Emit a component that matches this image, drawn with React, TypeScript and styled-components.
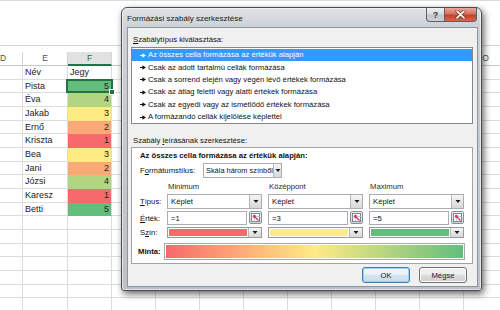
import React from "react";
import styled, { createGlobalStyle, css } from "styled-components";

const GlobalStyle = createGlobalStyle`
  html, body {
    margin: 0;
    padding: 0;
    background: #fff;
  }
  body {
    font-family: "Liberation Sans", Arial, sans-serif;
  }
`;

const COLS = "23px 45px 44px repeat(9, 44px)";
const RED = "#F8696B";
const YELLOW = "#FFEB84";
const GREEN = "#63BE7B";

const scale: Record<string, string> = {
  "1": RED,
  "2": "#FBAA77",
  "3": YELLOW,
  "4": "#B1D580",
  "5": GREEN,
};

const data: [string, string][] = [
  ["Név", "Jegy"],
  ["Pista", "5"],
  ["Éva", "4"],
  ["Jakab", "3"],
  ["Ernő", "2"],
  ["Kriszta", "1"],
  ["Bea", "3"],
  ["Jani", "2"],
  ["Józsi", "4"],
  ["Karesz", "1"],
  ["Betti", "5"],
];

const TOTAL_ROWS = 18;

// columns G..N sit under the dialog, only the visible letters are drawn
const headers = ["D", "E", "F", "", "", "", "", "", "", "", "", "O"];

const rules = [
  "Az összes cella formázása az értékük alapján",
  "Csak az adott tartalmú cellák formázása",
  "Csak a sorrend elején vagy végén lévő értékek formázása",
  "Csak az átlag feletti vagy alatti értékek formázása",
  "Csak az egyedi vagy az ismétlődő értékek formázása",
  "A formázandó cellák kijelölése képlettel",
];

const Sheet = styled.div`
  position: relative;
  width: 500px;
  height: 310px;
  overflow: hidden;
  background: #fff;
`;

const FormulaArea = styled.div`
  height: 44px;
  border-top: 1px solid #dcdcdc;
  border-bottom: 1px solid #d4d4d4;
`;

const HeaderRow = styled.div`
  display: grid;
  grid-template-columns: ${COLS};
  height: 14px;
  margin-top: 6px;
`;

const ColHeader = styled.div<{ $selected?: boolean; $clipped?: boolean }>`
  box-sizing: border-box;
  border-right: 1px solid #d4d4d4;
  border-bottom: 1px solid #c8c8c8;
  font-size: 8.5px;
  line-height: 13px;
  color: #505050;
  text-align: ${(p) => (p.$clipped ? "left" : "center")};
  ${(p) =>
    p.$selected &&
    css`
      background: #e1e1e1;
      color: #1f6b43;
      border-bottom: 2px solid #217346;
      line-height: 12px;
    `}
`;

const Grid = styled.div`
  display: grid;
  grid-template-columns: ${COLS};
  grid-auto-rows: 13.67px;
`;

const Cell = styled.div<{ $bg?: string; $num?: boolean; $active?: boolean }>`
  position: relative;
  box-sizing: border-box;
  border-right: 1px solid #dadcdd;
  border-bottom: 1px solid ${(p) => p.$bg ?? "#dadcdd"};
  background: ${(p) => p.$bg ?? "#fff"};
  font-size: 9px;
  line-height: 13px;
  color: #222;
  padding: 0 2px;
  text-align: ${(p) => (p.$num ? "right" : "left")};
  white-space: nowrap;
  ${(p) =>
    p.$active &&
    css`
      z-index: 1;
      &::after {
        content: "";
        position: absolute;
        inset: -1px -2px -1px -2px;
        border: 2px solid #217346;
      }
      &::before {
        content: "";
        position: absolute;
        right: -4px;
        bottom: -3px;
        width: 4px;
        height: 4px;
        background: #217346;
        border: 1px solid #fff;
        z-index: 2;
      }
    `}
`;

const Dialog = styled.div`
  position: absolute;
  left: 121px;
  top: 7px;
  width: 361px;
  height: 284px;
  box-sizing: border-box;
  display: flex;
  flex-direction: column;
  border: 1px solid #4a4d52;
  border-radius: 6px 6px 3px 3px;
  background: linear-gradient(180deg, #e0e2e5 0px, #cdd0d4 20px, #bdc0c5 100%);
  box-shadow: 2px 3px 7px rgba(0, 0, 0, 0.6), inset 0 0 0 1px rgba(255, 255, 255, 0.55);
  font-family: "Liberation Sans", Arial, sans-serif;
  font-size: 7.7px;
  color: #111;
  z-index: 5;
`;

const TitleBar = styled.div`
  height: 20px;
  display: flex;
  align-items: flex-start;
  padding-right: 4px;
`;

const Title = styled.div`
  flex: 1;
  padding-left: 5px;
  font-size: 8px;
  line-height: 21px;
  color: #1b1b1b;
`;

const CaptionButton = styled.div<{ $close?: boolean }>`
  box-sizing: border-box;
  width: ${(p) => (p.$close ? 32 : 19)}px;
  height: 14px;
  display: flex;
  align-items: center;
  justify-content: center;
  border: 1px solid #5b5e63;
  border-top: none;
  font-size: 9px;
  font-weight: bold;
  color: #3a3a3a;
  ${(p) =>
    p.$close
      ? css`
          border-radius: 0 0 4px 0;
          border-left: none;
          background: linear-gradient(180deg, #e9a99c 0%, #d7705d 45%, #c2422c 55%, #d26a4c 100%);
        `
      : css`
          border-radius: 0 0 0 4px;
          background: linear-gradient(180deg, #eef0f2 0%, #d8dbdf 45%, #c2c6cc 55%, #cfd3d8 100%);
        `}
`;

const Client = styled.div`
  flex: 1;
  margin: 0 4px 4px 6px;
  padding: 7px 4px 0 3px;
  background: #f0f0f0;
  box-shadow: 0 0 0 1px #8e949b;
  display: flex;
  flex-direction: column;
`;

const GroupLabel = styled.div<{ $gap?: number }>`
  height: 10px;
  line-height: 10px;
  margin: ${(p) => p.$gap ?? 0}px 0 ${(p) => (p.$gap ? 1 : 2)}px 2px;
  white-space: nowrap;
`;

const ListBox = styled.div`
  border: 1px solid #828790;
  background: #fff;
  padding-top: 1px;
`;

const RuleItem = styled.div<{ $selected?: boolean }>`
  height: 12.4px;
  line-height: 10px;
  display: flex;
  align-items: center;
  padding-left: 8px;
  white-space: nowrap;
  background: ${(p) => (p.$selected ? "#3399ff" : "transparent")};
  color: ${(p) => (p.$selected ? "#fff" : "#111")};

  svg {
    margin-right: 2px;
    flex: none;
  }
`;

const Panel = styled.div`
  border: 1px solid #a3a3a3;
  background: #fff;
  padding: 3px 0 3px 8px;
`;

const Heading = styled.div`
  font-weight: bold;
  height: 10px;
  line-height: 10px;
  white-space: nowrap;
`;

const StyleRow = styled.div`
  margin-top: 2px;
  height: 15px;
  display: flex;
  align-items: center;
`;

const StyleLabel = styled.div`
  width: 63px;
`;

const Combo = styled.div<{ $w?: number }>`
  box-sizing: border-box;
  width: ${(p) => (p.$w ? `${p.$w}px` : "100%")};
  height: 100%;
  display: flex;
  align-items: stretch;
  border: 1px solid #abadb3;
  background: #fff;
`;

const ComboText = styled.div<{ $pad?: number; $size?: number }>`
  flex: 1;
  padding-left: ${(p) => p.$pad ?? 3}px;
  font-size: ${(p) => (p.$size ? `${p.$size}px` : "inherit")};
  display: flex;
  align-items: center;
  white-space: nowrap;
`;

const DropButton = styled.div<{ $w?: number }>`
  box-sizing: border-box;
  width: ${(p) => p.$w ?? 12}px;
  flex: none;
  display: flex;
  align-items: center;
  justify-content: center;
  border-left: 1px solid #b5b7bb;
  background: linear-gradient(180deg, #f6f6f6 0%, #e6e6e6 50%, #d8d8d8 100%);
`;

const ScaleGrid = styled.div`
  margin-top: 4px;
  display: grid;
  grid-template-columns: 21px repeat(3, 95px);
  grid-template-rows: 10px 15px 14px 11px;
  column-gap: 6px;
  row-gap: 2px;
`;

const RowLabel = styled.div`
  display: flex;
  align-items: center;
  white-space: nowrap;
`;

const ColTitle = styled.div`
  line-height: 10px;
  padding-left: 1px;
  color: #2a2a2a;
`;

const Field = styled.div`
  display: flex;
  gap: 2px;
  height: 100%;
`;

const TextInput = styled.div`
  flex: 1;
  box-sizing: border-box;
  border: 1px solid #abadb3;
  background: #fff;
  padding-left: 3px;
  display: flex;
  align-items: center;
`;

const RefButton = styled.div`
  box-sizing: border-box;
  width: 13px;
  height: 13px;
  flex: none;
  border: 1px solid #8b9097;
  border-radius: 2px;
  background: linear-gradient(180deg, #eef1f5, #cfd6df);
  display: flex;
  align-items: center;
  justify-content: center;
`;

const ColorPicker = styled.div`
  display: flex;
  height: 100%;
  box-sizing: border-box;
  border: 1px solid #9a9a9a;
  background: #fff;
`;

const Swatch = styled.div<{ $color: string }>`
  flex: 1;
  margin: 1px;
  background: ${(p) => p.$color};
`;

const PreviewRow = styled.div`
  margin-top: 5px;
  height: 17px;
  display: flex;
  align-items: center;
`;

const PreviewLabel = styled.div`
  width: 26px;
  margin-left: -2px;
  font-weight: bold;
`;

const PreviewBar = styled.div`
  box-sizing: border-box;
  width: 301px;
  height: 17px;
  border: 1px solid #a8a8a8;
  padding: 1px;
  background: #fff;

  div {
    height: 100%;
    background: linear-gradient(90deg, ${RED} 0%, ${YELLOW} 50%, ${GREEN} 100%);
  }
`;

const ButtonRow = styled.div`
  margin-top: 3px;
  display: flex;
  justify-content: flex-end;
  gap: 9px;
  padding-right: 6px;
`;

const PushButton = styled.div<{ $default?: boolean }>`
  box-sizing: border-box;
  width: 48px;
  height: 16px;
  display: flex;
  align-items: center;
  justify-content: center;
  border-radius: 3px;
  border: 1px solid ${(p) => (p.$default ? "#3c7fb1" : "#707070")};
  background: ${(p) =>
    p.$default
      ? "linear-gradient(180deg, #f3f8fb 0%, #e6eff6 50%, #d5e4ef 50%, #c9dcea 100%)"
      : "linear-gradient(180deg, #f4f4f4 0%, #ebebeb 50%, #dddddd 50%, #cfcfcf 100%)"};
  box-shadow: ${(p) => (p.$default ? "inset 0 0 0 1px #9fd0f0" : "inset 0 0 0 1px #fafafa")};
  color: #1a1a1a;
`;

const Arrow = ({ color }: { color: string }) => (
  <svg width="6" height="5" viewBox="0 0 6 5">
    <path d="M0 2.5H3" stroke={color} strokeWidth="1" />
    <path d="M2.4 0.3L6 2.5L2.4 4.7Z" fill={color} />
  </svg>
);

const DownTriangle = () => (
  <svg width="6" height="5" viewBox="0 0 6 5">
    <path d="M0.5 1H5.5L3 4Z" fill="#1a1a1a" />
  </svg>
);

const RefIcon = () => (
  <svg width="9" height="9" viewBox="0 0 9 9">
    <rect x="0.5" y="0.5" width="8" height="8" fill="#fff" stroke="#7d8590" />
    <path d="M0.5 3.5H8.5M3.5 0.5V8.5" stroke="#b8c0ca" strokeWidth="0.8" />
    <path d="M7.5 7.5L3 3" stroke="#d2304a" strokeWidth="1.3" />
    <path d="M2 2L5.4 2.6L2.6 5.4Z" fill="#d2304a" />
  </svg>
);

const CloseGlyph = () => (
  <svg width="11" height="9" viewBox="0 0 11 9">
    <path d="M2 1.2L9 7.8M9 1.2L2 7.8" stroke="#6b2a20" strokeWidth="3" strokeLinecap="round" />
    <path d="M2 1.2L9 7.8M9 1.2L2 7.8" stroke="#fff" strokeWidth="1.7" strokeLinecap="round" />
  </svg>
);

function Spreadsheet() {
  const cells: React.ReactNode[] = [];
  for (let r = 0; r < TOTAL_ROWS; r++) {
    const row = data[r];
    for (let c = 0; c < headers.length; c++) {
      const key = `${r}-${c}`;
      if (row && c === 1) {
        cells.push(<Cell key={key}>{row[0]}</Cell>);
      } else if (row && c === 2) {
        const isNum = r > 0;
        cells.push(
          <Cell key={key} $num={isNum} $bg={isNum ? scale[row[1]] : undefined} $active={r === 1}>
            {row[1]}
          </Cell>
        );
      } else {
        cells.push(<Cell key={key} />);
      }
    }
  }
  return (
    <>
      <FormulaArea />
      <HeaderRow>
        {headers.map((h, i) => (
          <ColHeader key={i} $clipped={i === 0} $selected={h === "F"}>
            {h}
          </ColHeader>
        ))}
      </HeaderRow>
      <Grid>{cells}</Grid>
    </>
  );
}

function RuleDialog() {
  return (
    <Dialog>
      <TitleBar>
        <Title>Formázási szabály szerkesztése</Title>
        <CaptionButton>?</CaptionButton>
        <CaptionButton $close>
          <CloseGlyph />
        </CaptionButton>
      </TitleBar>
      <Client>
        <GroupLabel>
          <u>S</u>zabálytípus kiválasztása:
        </GroupLabel>
        <ListBox>
          {rules.map((rule, i) => (
            <RuleItem key={rule} $selected={i === 0}>
              <Arrow color={i === 0 ? "#fff" : "#111"} />
              {rule}
            </RuleItem>
          ))}
        </ListBox>
        <GroupLabel $gap={12}>
          Szabály <u>l</u>eírásának szerkesztése:
        </GroupLabel>
        <Panel>
          <Heading>Az összes cella formázása az értékük alapján:</Heading>
          <StyleRow>
            <StyleLabel>
              F<u>o</u>rmátumstílus:
            </StyleLabel>
            <Combo $w={79}>
              <ComboText $pad={2} $size={7.4}>
                Skála három színből
              </ComboText>
              <DropButton $w={8}>
                <DownTriangle />
              </DropButton>
            </Combo>
          </StyleRow>
          <ScaleGrid>
            <div />
            <ColTitle>Minimum</ColTitle>
            <ColTitle>Középpont</ColTitle>
            <ColTitle>Maximum</ColTitle>

            <RowLabel>
              <u>T</u>ípus:
            </RowLabel>
            {["min", "mid", "max"].map((k) => (
              <Combo key={k}>
                <ComboText>Képlet</ComboText>
                <DropButton>
                  <DownTriangle />
                </DropButton>
              </Combo>
            ))}

            <RowLabel>
              <u>É</u>rték:
            </RowLabel>
            {["=1", "=3", "=5"].map((v) => (
              <Field key={v}>
                <TextInput>{v}</TextInput>
                <RefButton>
                  <RefIcon />
                </RefButton>
              </Field>
            ))}

            <RowLabel>
              S<u>z</u>ín:
            </RowLabel>
            {[RED, YELLOW, GREEN].map((col) => (
              <ColorPicker key={col}>
                <Swatch $color={col} />
                <DropButton $w={13}>
                  <DownTriangle />
                </DropButton>
              </ColorPicker>
            ))}
          </ScaleGrid>
          <PreviewRow>
            <PreviewLabel>Minta:</PreviewLabel>
            <PreviewBar>
              <div />
            </PreviewBar>
          </PreviewRow>
        </Panel>
        <ButtonRow>
          <PushButton $default>OK</PushButton>
          <PushButton>Mégse</PushButton>
        </ButtonRow>
      </Client>
    </Dialog>
  );
}

export default function App() {
  return (
    <>
      <GlobalStyle />
      <Sheet>
        <Spreadsheet />
        <RuleDialog />
      </Sheet>
    </>
  );
}
